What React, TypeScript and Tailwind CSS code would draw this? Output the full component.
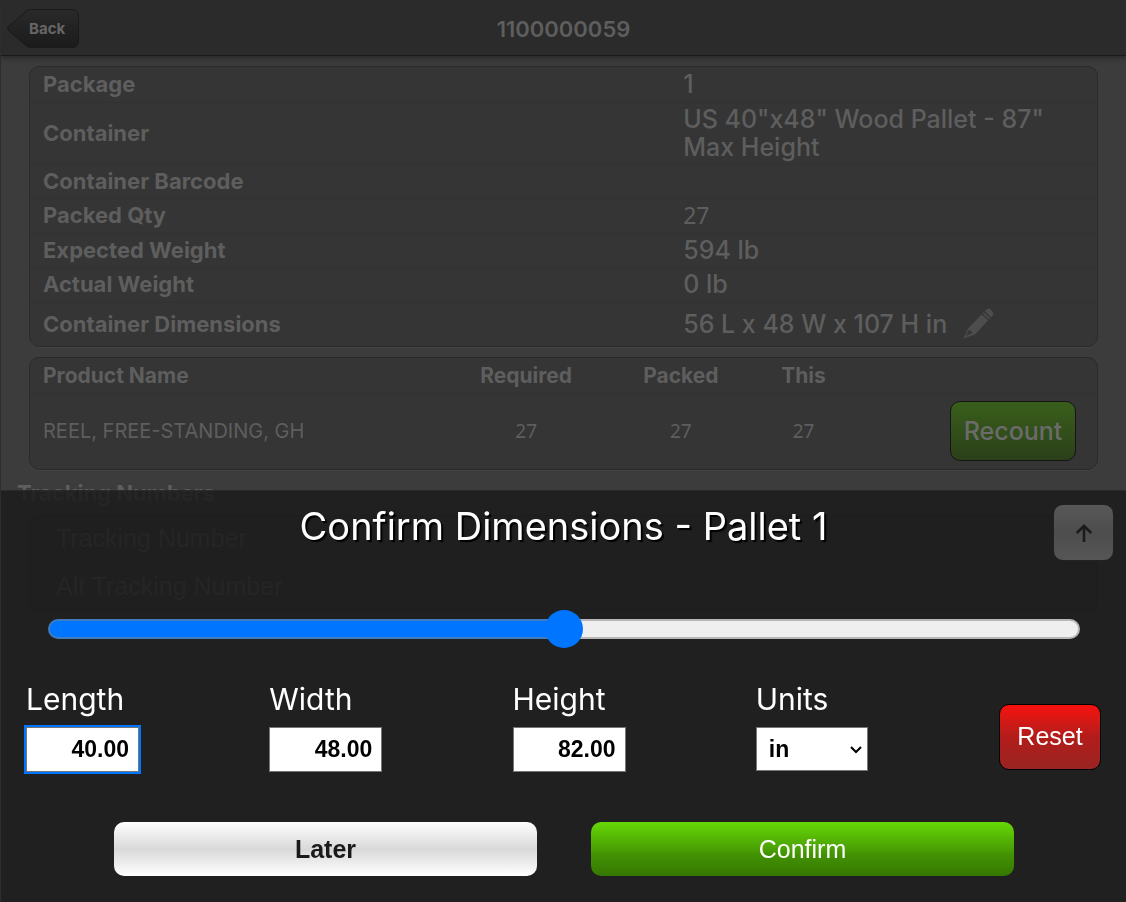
import { useState } from "react";
import type { ReactNode } from "react";

const facts: { label: string; value: ReactNode; height: string; size: string }[] = [
  { label: "Package", value: "1", height: "h-9", size: "text-[25px] font-medium" },
  { label: "Container", value: 'US 40"x48" Wood Pallet - 87" Max Height', height: "h-[62px]", size: "text-[25px] font-medium" },
  { label: "Container Barcode", value: "", height: "h-[34px]", size: "text-[25px] font-medium" },
  { label: "Packed Qty", value: "27", height: "h-[35px]", size: "text-[23px] font-['Noto_Sans',sans-serif]" },
  { label: "Expected Weight", value: "594 lb", height: "h-[34px]", size: "text-[25px] font-medium" },
  { label: "Actual Weight", value: "0 lb", height: "h-[35px]", size: "text-[25px] font-medium" },
  {
    label: "Container Dimensions",
    value: (
      <span className="flex items-center gap-4">
        56 L x 48 W x 107 H in
        <button type="button" aria-label="Edit dimensions">
          <Pencil />
        </button>
      </span>
    ),
    height: "h-[43px]",
    size: "text-[25px] font-medium",
  },
];

function Pencil() {
  return (
    <svg width="32" height="32" viewBox="0 0 32 32" fill="#4d4d4d">
      <path d="M.5 30.500 5 20.500 18.500 6.500 25 12.500 12 26.500ZM6 21.700 3 27.800 10 25Z" fillRule="evenodd" />
      <path d="M19.500 5.500 20.800 4.200 27.300 10.200 26 11.500Z" />
      <path d="M21.800 3.200 23.500 1.500Q25.800 0 28 1.800L29.400 3.200Q31.200 5.500 29.500 7.800L28.300 9.200Z" />
    </svg>
  );
}

const card = "overflow-hidden rounded-[10px] border border-[#2a2a2a] bg-[#353535] shadow-[0_1px_0_#444]";

function Dimension({ label, value, focus }: { label: string; value: string; focus?: boolean }) {
  const [text, setText] = useState(value);
  return (
    <label className="flex flex-col gap-2.5 text-[30px] leading-9">
      {label}
      <input
        value={text}
        onChange={(e) => setText(e.target.value)}
        className={
          "h-[45px] w-[113px] border border-[#767676] bg-white pr-[9px] text-right font-['Liberation_Sans',sans-serif] text-[23px] font-bold text-black outline-[#0075ff] " +
          (focus ? "outline-2" : "outline-0")
        }
      />
    </label>
  );
}

export default function App() {
  const [scale, setScale] = useState(50);
  return (
    <div className="relative min-h-screen overflow-hidden border-t border-l border-[#2b2f2a] bg-[#3c3c3c] font-[Inter,sans-serif] text-[#5e5e5e]">
      <header className="relative flex h-[55px] items-center justify-center border-b border-[#1a1a1a] bg-[#2b2b2b] shadow-[0_1px_6px_#222]">
        <button type="button" className="absolute top-2 left-1.5 flex h-10 w-[73px] items-center pl-[22px] text-[15px] font-bold text-[#666]">
          <svg className="absolute inset-0" width="73" height="40" viewBox="0 0 73 40">
            <defs>
              <linearGradient id="back" x2="0" y2="1">
                <stop offset="0" stopColor="#2a2a2a" />
                <stop offset=".5" stopColor="#222" />
                <stop offset="1" stopColor="#1b1b1b" />
              </linearGradient>
            </defs>
            <path d="M20 1.500Q22 .5 24 .5H65Q71.500.5 71.500 7V32Q71.500 38.500 65 38.500H24Q22 38.500 20 37.500L1 21Q0 19.500 1 18Z" fill="url(#back)" stroke="#1a1a1a" />
          </svg>
          <span className="relative">Back</span>
        </button>
        <h1 className="pt-0.5 text-[22px] font-semibold">1100000059</h1>
      </header>

      <main className="px-7 pt-2.5">
        <dl className={card}>
          {facts.map((f) => (
            <div key={f.label} className={"grid grid-cols-[60%_1fr] items-center border-b border-[#313131] last:border-0 " + f.height}>
              <dt className="pb-0.5 pl-[13px] text-[22px] leading-7 font-bold">{f.label}</dt>
              <dd className={"max-w-[400px] pb-0.5 pl-[13px] leading-7 " + f.size}>{f.value}</dd>
            </div>
          ))}
        </dl>

        <div className={"mt-2.5 " + card}>
          <table className="w-full table-fixed">
            <colgroup>
              <col className="w-[39%]" />
              <col className="w-[15%]" />
              <col className="w-[14%]" />
              <col className="w-[9%]" />
              <col />
            </colgroup>
            <thead>
              <tr className="h-[35px] border-b border-[#313131] text-[21px] leading-7">
                <th className="pt-0.5 pl-[13px] text-left font-bold">Product Name</th>
                <th className="pt-0.5 font-bold">Required</th>
                <th className="pt-0.5 font-bold">Packed</th>
                <th className="pt-0.5 font-bold">This</th>
                <td />
              </tr>
            </thead>
            <tbody>
              <tr className="h-[76px] text-center font-['Noto_Sans',sans-serif] text-[19px]">
                <td className="pl-[13px] text-left font-[Inter,sans-serif] text-xl">REEL, FREE-STANDING, GH</td>
                <td>27</td>
                <td>27</td>
                <td>27</td>
                <td className="pr-[21px] text-right">
                  <button type="button" className="h-[60px] w-[126px] rounded-[10px] border border-[#151515] bg-linear-to-b from-[#395f1b] to-[#2b4019] font-[Inter,sans-serif] text-[25px] font-medium text-[#6b6b6b]">
                    Recount
                  </button>
                </td>
              </tr>
            </tbody>
          </table>
        </div>

        <h2 className="mt-[7px] -ml-3 text-[22px] leading-8 font-bold">Tracking Numbers</h2>
        <div className={"mt-1.5 font-['Liberation_Sans',sans-serif] text-[25px] " + card}>
          <input aria-label="Tracking Number" placeholder="Tracking Number" className="block h-12 w-full px-[26px] pb-1 placeholder:text-[#5e5e5e]" />
          <input aria-label="Alt Tracking Number" placeholder="Alt Tracking Number" className="block h-12 w-full px-[26px] pb-1 placeholder:text-[#5e5e5e]" />
        </div>
      </main>

      <section role="dialog" aria-labelledby="sheet-title" className="fixed right-0 bottom-0 left-px border-t border-[#2a2a2a] bg-[#1b1b1b]/85 px-[25px] pb-[26px] text-white">
        <h2 id="sheet-title" className="pt-3 text-center text-[38px] leading-[46px] [text-shadow:2px_2px_1px_#000]">
          Confirm Dimensions - Pallet 1
        </h2>
        <button type="button" aria-label="Scroll to top" className="absolute top-[13px] right-3 flex h-[57px] w-[61px] items-center justify-center rounded-[10px] border border-[#222] bg-linear-to-b from-[#585858] via-[#4d4d4d] to-[#565656]">
          <svg width="18" height="20" viewBox="0 0 18 20" fill="none" stroke="#1b1b1b" strokeWidth="2.600">
            <path d="M9 19V3M1.800 10 9 2.800 16.200 10" />
          </svg>
        </button>

        <input
          type="range"
          aria-label="Scale"
          value={scale}
          onChange={(e) => setScale(Number(e.target.value))}
          style={{ backgroundImage: `linear-gradient(to right, #0075ff ${scale}%, #efefef ${scale}%)` }}
          className="mx-[22px] mt-[70px] block h-5 w-[calc(100%-43px)] appearance-none rounded-full border-2 border-[#808080]/50 bg-origin-border [&::-webkit-slider-thumb]:size-[38px] [&::-webkit-slider-thumb]:appearance-none [&::-webkit-slider-thumb]:rounded-full [&::-webkit-slider-thumb]:bg-[#0075ff]"
        />

        <div className="mt-[42px] grid grid-cols-[1fr_1fr_1fr_1fr_102px]">
          <Dimension label="Length" value="40.00" focus />
          <Dimension label="Width" value="48.00" />
          <Dimension label="Height" value="82.00" />
          <label className="flex flex-col gap-2.5 text-[30px] leading-9">
            Units
            <span className="relative w-28">
              <select className="block h-11 w-full appearance-none border border-[#767676] bg-white pl-3 font-['Liberation_Sans',sans-serif] text-[23px] font-bold text-black">
                <option>in</option>
                <option>cm</option>
              </select>
              <svg className="pointer-events-none absolute top-[19px] right-1.5" width="12" height="8" viewBox="0 0 12 8" fill="none" stroke="#000" strokeWidth="2">
                <path d="M1 1 6 6 11 1" />
              </svg>
            </span>
          </label>
          <button type="button" className="mt-[23px] h-[66px] rounded-[10px] border border-black bg-linear-to-b from-[#f8100c] via-[#b21c1a] to-[#992422] font-['Liberation_Sans',sans-serif] text-[25px]">
            Reset
          </button>
        </div>

        <div className="mr-[87px] ml-[88px] mt-[50px] grid grid-cols-2 gap-[54px] font-['Liberation_Sans',sans-serif] text-[25px]">
          <button type="button" className="h-[54px] rounded-[10px] bg-linear-to-b from-white via-[#d9d9d9] to-white pt-0.5 font-bold text-[#1a1a1a]">
            Later
          </button>
          <button type="button" className="h-[54px] rounded-[10px] bg-[linear-gradient(#66d806,#4aa004_50%,#429203_60%,#367802)] pt-0.5">
            Confirm
          </button>
        </div>
      </section>
    </div>
  );
}
